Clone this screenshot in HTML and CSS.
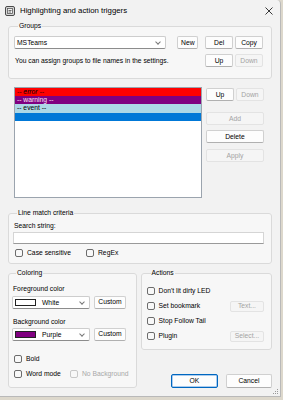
FILE: index.html
```html
<!DOCTYPE html>
<html>
<head>
    <meta charset="UTF-8">
    <title>Highlighting and action triggers</title>
    <link rel="stylesheet" href="styles.css">
</head>
<body>
    <div class="window">
        <div class="titlebar">
            <svg class="app-icon" width="10" height="10" viewBox="0 0 10 10">
                <rect x="0.5" y="0.5" width="9" height="9" rx="1.5" fill="#d8d8d8" stroke="#4a4a4a"/>
                <rect x="2.5" y="2.5" width="5" height="5" fill="#f4f4f4" stroke="#5a5a5a" stroke-width="0.8"/>
                <path d="M3.5 4.5 H6.5 M3.5 6 H6" stroke="#333" stroke-width="0.7"/>
            </svg>
            <span class="title">Highlighting and action triggers</span>
            <svg class="close" width="8" height="8" viewBox="0 0 8 8">
                <path d="M0.5 0.5 L7.5 7.5 M7.5 0.5 L0.5 7.5" stroke="#222" stroke-width="0.9"/>
            </svg>
        </div>

        <div class="content">
            <!-- группы -->
            <fieldset class="group groups">
                <legend>Groups</legend>
                <div class="row">
                    <div class="combo group-combo">
                        <span class="combo-text">MSTeams</span>
                        <span class="chevron"></span>
                    </div>
                    <button class="btn btn-new">New</button>
                    <button class="btn btn-del">Del</button>
                    <button class="btn btn-copy">Copy</button>
                </div>
                <div class="row row-hint">
                    <span class="hint">You can assign groups to file names in the settings.</span>
                    <button class="btn btn-small">Up</button>
                    <button class="btn btn-small" disabled>Down</button>
                </div>
            </fieldset>

            <!-- список триггеров -->
            <div class="triggers">
                <div class="listbox">
                    <div class="entry entry-error">-- error --</div>
                    <div class="entry entry-warning">-- warning --</div>
                    <div class="entry entry-event">-- event --</div>
                    <div class="entry entry-selected"></div>
                </div>
                <div class="side">
                    <div class="side-pair">
                        <button class="btn btn-small">Up</button>
                        <button class="btn btn-small" disabled>Down</button>
                    </div>
                    <button class="btn btn-wide btn-add" disabled>Add</button>
                    <button class="btn btn-wide btn-delete">Delete</button>
                    <button class="btn btn-wide btn-apply" disabled>Apply</button>
                </div>
            </div>

            <fieldset class="group match">
                <legend>Line match criteria</legend>
                <div class="label">Search string:</div>
                <div class="textbox"></div>
                <div class="checks">
                    <label class="check check-case"><span class="box"></span>Case sensitive</label>
                    <label class="check"><span class="box"></span>RegEx</label>
                </div>
            </fieldset>

            <div class="lower">
                <fieldset class="group coloring">
                    <legend>Coloring</legend>
                    <div class="label">Foreground color</div>
                    <div class="color-row">
                        <div class="combo color-combo">
                            <span class="swatch swatch-white"></span>
                            <span class="combo-text">White</span>
                            <span class="chevron"></span>
                        </div>
                        <button class="btn btn-custom">Custom</button>
                    </div>
                    <div class="label label-bg">Background color</div>
                    <div class="color-row color-row-bg">
                        <div class="combo color-combo">
                            <span class="swatch swatch-purple"></span>
                            <span class="combo-text">Purple</span>
                            <span class="chevron"></span>
                        </div>
                        <button class="btn btn-custom">Custom</button>
                    </div>
                    <label class="check check-bold"><span class="box"></span>Bold</label>
                    <div class="checks checks-word">
                        <label class="check check-word"><span class="box"></span>Word mode</label>
                        <label class="check disabled"><span class="box"></span>No Background</label>
                    </div>
                </fieldset>

                <div class="right-col">
                    <fieldset class="group actions">
                        <legend>Actions</legend>
                        <div class="action-row">
                            <label class="check"><span class="box"></span>Don't lit dirty LED</label>
                        </div>
                        <div class="action-row">
                            <label class="check"><span class="box"></span>Set bookmark</label>
                            <button class="btn btn-action" disabled>Text...</button>
                        </div>
                        <div class="action-row">
                            <label class="check"><span class="box"></span>Stop Follow Tail</label>
                        </div>
                        <div class="action-row">
                            <label class="check"><span class="box"></span>Plugin</label>
                            <button class="btn btn-action" disabled>Select...</button>
                        </div>
                    </fieldset>

                    <div class="dialog-buttons">
                        <button class="btn btn-ok">OK</button>
                        <button class="btn btn-cancel">Cancel</button>
                    </div>
                </div>
            </div>
        </div>

        <svg class="grip" width="6" height="6" viewBox="0 0 6 6">
            <rect x="4" y="0" width="1" height="1" fill="#999"/>
            <rect x="2" y="2" width="1" height="1" fill="#999"/>
            <rect x="4" y="2" width="1" height="1" fill="#999"/>
            <rect x="0" y="4" width="1" height="1" fill="#999"/>
            <rect x="2" y="4" width="1" height="1" fill="#999"/>
            <rect x="4" y="4" width="1" height="1" fill="#999"/>
        </svg>
    </div>
</body>
</html>
```

FILE: styles.css
```css
body {
    margin: 0;
    background: #ddd8cc;
    font-family: "Liberation Sans", Arial, sans-serif;
    font-size: 6.75px;
    line-height: 8px;
    color: #000;
}

.window {
    position: relative;
    width: 281px;
    height: 397px;
    box-sizing: border-box;
    background: #f2f2f2;
    border: 1px solid #b9b9b9;
    border-top: none;
    border-left: none;
    border-radius: 0 4px 0 0;
}

/* Заголовок окна */
.titlebar {
    height: 22px;
    display: flex;
    align-items: center;
    padding-left: 5px;
}

.app-icon {
    flex: none;
    margin-top: -1px;
}

.title {
    margin-left: 5px;
    font-size: 7.8px;
    color: #000;
    flex: 1;
}

.close {
    margin-right: 7px;
}

.content {
    padding: 0 8px;
}

/* Групповые рамки */
.group {
    margin: 0;
    padding: 0;
    border: 1px solid #dadada;
    border-radius: 3px;
    background: #f7f7f7;
    min-width: 0;
}

.group legend {
    margin-left: 4px;
    padding: 0 1px;
    line-height: 8px;
}

/* Кнопки */
.btn {
    font-family: inherit;
    font-size: 6.75px;
    line-height: 8px;
    height: 13px;
    padding: 0;
    margin: 0;
    box-sizing: border-box;
    background: #fdfdfd;
    color: #000;
    border: 1px solid #d0d0d0;
    border-bottom-color: #b0b0b0;
    border-radius: 2px;
}

.btn:disabled {
    background: #f5f5f5;
    border-color: #e3e3e3;
    color: #a3a3a3;
}

.btn-small {
    width: 28px;
}

.btn-wide {
    width: 58px;
    display: block;
}

/* Комбобоксы */
.combo {
    position: relative;
    display: flex;
    align-items: center;
    height: 13px;
    box-sizing: border-box;
    background: #fff;
    border: 1px solid #cdcdcd;
    border-bottom-color: #8c8c8c;
    border-radius: 2px;
}

.chevron {
    position: absolute;
    right: 5px;
    top: 3px;
    width: 3px;
    height: 3px;
    border-right: 1px solid #777;
    border-bottom: 1px solid #777;
    transform: rotate(45deg);
}

/* Groups */
.groups {
    padding: 6px 8px 11px 5px;
}

.row {
    display: flex;
    align-items: center;
}

.group-combo {
    width: 153px;
    padding-left: 2px;
}

.btn-new {
    width: 21px;
    margin-left: 11px;
}

.btn-del {
    width: 28px;
    margin-left: 7px;
}

.btn-copy {
    width: 28px;
    margin-left: 2px;
}

.row-hint {
    margin-top: 5px;
}

.hint {
    flex: 1;
    padding-left: 1px;
}

.row-hint .btn + .btn {
    margin-left: 2px;
}

/* Список */
.triggers {
    display: flex;
    margin-top: 8px;
}

.listbox {
    width: 188px;
    height: 111px;
    margin-left: 6px;
    box-sizing: border-box;
    background: #fff;
    border: 1px solid #9ba4ae;
}

.entry {
    height: 8px;
    line-height: 8px;
    padding-left: 2px;
}

.entry-error {
    background: #ff0000;
    color: #000;
    font-style: italic;
}

.entry-warning {
    background: #800080;
    color: #fbe6fb;
}

.entry-event {
    height: 9px;
    background: #add8e6;
    color: #000;
}

.entry-selected {
    background: #0078d7;
}

.side {
    margin-left: 4px;
    padding-top: 1px;
}

.side-pair {
    display: flex;
    gap: 2px;
}

.btn-add {
    margin-top: 11px;
}

.btn-delete {
    margin-top: 5px;
}

.btn-apply {
    margin-top: 6px;
}

/* Line match criteria */
.match {
    margin-top: 11px;
    padding: 5px 7px 6px 4px;
}

.label {
    padding-left: 1px;
}

.textbox {
    margin-top: 2px;
    height: 12px;
    box-sizing: border-box;
    background: #fff;
    border: 1px solid #d5d5d5;
    border-bottom-color: #9a9a9a;
}

.checks {
    display: flex;
    margin-top: 5px;
}

.check {
    display: flex;
    align-items: center;
    height: 8px;
    white-space: nowrap;
}

.box {
    flex: none;
    width: 8px;
    height: 8px;
    box-sizing: border-box;
    border: 1px solid #6c6c6c;
    border-radius: 2px;
    background: #f8f8f8;
    margin-right: 4px;
}

.check.disabled {
    color: #a8a8a8;
}

.check.disabled .box {
    border-color: #c8c8c8;
}

.match .checks {
    padding-left: 2px;
}

.check-case {
    width: 71px;
}

/* Coloring / Actions */
.lower {
    display: flex;
    align-items: flex-start;
    margin-top: 5px;
}

.coloring {
    width: 129px;
    box-sizing: border-box;
    padding: 8px 3px 9px 3px;
}

.coloring .label {
    margin-bottom: 3px;
}

.coloring .label-bg {
    margin-top: 9px;
    margin-bottom: 2px;
}

.color-row {
    display: flex;
    align-items: center;
}

.color-combo {
    width: 78px;
    padding-left: 2px;
}

.swatch {
    width: 21px;
    height: 7px;
    box-sizing: border-box;
    border: 1px solid #222;
    margin-right: 6px;
}

.swatch-white {
    background: #fff;
}

.swatch-purple {
    background: #800080;
}

.btn-custom {
    width: 32px;
    margin-left: 4px;
    margin-top: -1px;
}

.check-bold {
    margin-top: 14px;
    padding-left: 2px;
}

.checks-word {
    margin-top: 7px;
    padding-left: 2px;
}

.check-word {
    width: 56px;
}

.right-col {
    margin-left: 4px;
    width: 132px;
}

.actions {
    padding: 8px 7px 7px 5px;
}

.action-row {
    display: flex;
    align-items: center;
    justify-content: space-between;
    height: 12px;
}

.action-row + .action-row {
    margin-top: 3px;
}

.btn-action {
    width: 34px;
    height: 11px;
}

.dialog-buttons {
    display: flex;
    justify-content: flex-end;
    gap: 8px;
    margin-top: 24px;
}

.btn-ok {
    width: 47px;
    height: 14px;
    border: 1px solid #0067c0;
    box-shadow: inset 0 0 0 0.5px #5b9be0;
}

.btn-cancel {
    width: 46px;
    height: 14px;
}

.grip {
    position: absolute;
    right: 1px;
    bottom: 1px;
}
```
